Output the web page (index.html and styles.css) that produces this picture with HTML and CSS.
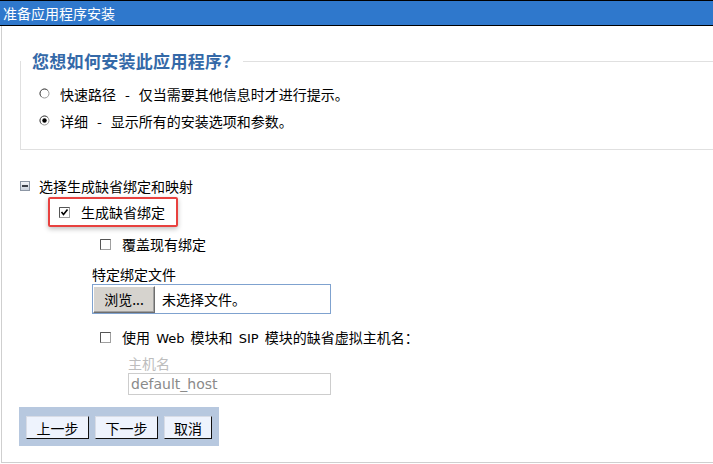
FILE: index.html
```html
<!DOCTYPE html>
<html lang="zh">
<head>
<meta charset="utf-8">
<link rel="stylesheet" href="styles.css">
</head>
<body>
<div class="header">准备应用程序安装</div>
<div class="main">
  <fieldset class="box">
    <legend class="legend">您想如何安装此应用程序？</legend>
    <div class="radio-row">
      <svg class="radio" width="11" height="11" viewBox="0 0 11 11"><circle cx="5.5" cy="5.5" r="4.5" fill="#fff" stroke="#9a9a9a" stroke-width="1"/><path d="M2.3 8.7 A4.5 4.5 0 0 1 8.7 2.3" fill="none" stroke="#555" stroke-width="1"/></svg>
      <span class="rlabel">快速路径<span class="sep">-</span>仅当需要其他信息时才进行提示。</span>
    </div>
    <div class="radio-row">
      <svg class="radio" width="11" height="11" viewBox="0 0 11 11"><circle cx="5.5" cy="5.5" r="4.5" fill="#fff" stroke="#9a9a9a" stroke-width="1"/><path d="M2.3 8.7 A4.5 4.5 0 0 1 8.7 2.3" fill="none" stroke="#555" stroke-width="1"/><circle cx="5.5" cy="5.5" r="2.2" fill="#000"/></svg>
      <span class="rlabel">详细<span class="sep">-</span>显示所有的安装选项和参数。</span>
    </div>
  </fieldset>

  <div class="section-head">
    <svg class="toggle" width="10" height="10" viewBox="0 0 10 10"><defs><linearGradient id="g" x1="0" y1="0" x2="0" y2="1"><stop offset="0" stop-color="#f4f6fa"/><stop offset="1" stop-color="#c8d0dc"/></linearGradient></defs><rect x="0.5" y="0.5" width="9" height="9" fill="url(#g)" stroke="#8c96a4"/><rect x="2" y="4" width="6" height="2" fill="#3a3f48"/></svg>
    <span>选择生成缺省绑定和映射</span>
  </div>

  <div class="highlight">
    <svg class="cb" width="11" height="11" viewBox="0 0 11 11"><rect x="0.5" y="0.5" width="10" height="10" fill="#fff" stroke="#a0a0a0"/><path d="M0.5 10.5 V0.5 H10.5" fill="none" stroke="#555"/><path d="M2.5 5 L4.5 7.5 L8.5 2.5" fill="none" stroke="#000" stroke-width="1.6"/></svg>
    <span>生成缺省绑定</span>
  </div>

  <div class="cb-row indent">
    <svg class="cb" width="11" height="11" viewBox="0 0 11 11"><rect x="0.5" y="0.5" width="10" height="10" fill="#fff" stroke="#a0a0a0"/><path d="M0.5 10.5 V0.5 H10.5" fill="none" stroke="#555"/></svg>
    <span class="cb-text">覆盖现有绑定</span>
  </div>

  <div class="file-label">特定绑定文件</div>
  <div class="file-box">
    <span class="browse">浏览...</span>
    <span class="nofile">未选择文件。</span>
  </div>

  <div class="cb-row indent host-row">
    <svg class="cb" width="11" height="11" viewBox="0 0 11 11"><rect x="0.5" y="0.5" width="10" height="10" fill="#fff" stroke="#a0a0a0"/><path d="M0.5 10.5 V0.5 H10.5" fill="none" stroke="#555"/></svg>
    <span class="cb-text">使用 <span class="latin">Web</span> 模块和 <span class="latin">SIP</span> 模块的缺省虚拟主机名：</span>
  </div>

  <div class="host-label">主机名</div>
  <div class="host-input">default_host</div>

  <div class="btn-bar">
    <button class="btn">上一步</button>
    <button class="btn">下一步</button>
    <button class="btn">取消</button>
  </div>
</div>
</body>
</html>
```

FILE: styles.css
```css
html, body {
  margin: 0;
  padding: 0;
  background: #fff;
}
body {
  font-family: "Noto Sans CJK SC", "DejaVu Sans", sans-serif;
  font-size: 14px;
  color: #000;
  width: 713px;
  height: 464px;
  overflow: hidden;
}
.header {
  height: 24px;
  line-height: 24px;
  background: #2f78cc;
  border-top: 1px solid #000;
  border-bottom: 1px solid #000;
  color: #fff;
  padding-left: 3px;
  font-size: 14px;
}
.main {
  margin-left: 1px;
  border-left: 1px solid #cfcfcf;
  border-bottom: 1px solid #cfcfcf;
  height: 437px;
  box-sizing: border-box;
  display: flex;
  flex-direction: column;
  align-items: flex-start;
}
.box {
  align-self: stretch;
  margin: 25px 0 0 18px;
  padding: 0 0 15px 0;
  border: 1px solid #e0e0e0;
  border-right: none;
  min-width: 0;
}
.legend {
  padding: 0 3px 0 11px;
  margin-left: 0;
  font-size: 17px;
  font-weight: bold;
  color: #3469a8;
  line-height: 20px;
  height: 20px;
  letter-spacing: 0.3px;
}
.radio-row {
  display: flex;
  align-items: center;
  height: 27px;
  padding-left: 18px;
}
.radio-row:first-of-type {
  margin-top: 9px;
}
.radio {
  display: block;
  flex: none;
}
.rlabel {
  margin-left: 10px;
  line-height: 20px;
}
.sep {
  margin: 0 9px;
}
.section-head {
  display: flex;
  align-items: center;
  height: 20px;
  margin: 26px 0 0 18px;
}
.toggle {
  display: block;
  margin-right: 9px;
}
.highlight {
  display: flex;
  align-items: center;
  margin: 1px 0 0 46px;
  width: 130px;
  height: 30px;
  box-sizing: border-box;
  border: 2px solid #e8413f;
  border-radius: 2px;
  padding-left: 9px;
  box-shadow: 0 2px 5px rgba(0,0,0,0.25);
}
.cb {
  display: block;
  flex: none;
}
.highlight span {
  margin-left: 11px;
}
.cb-row {
  display: flex;
  align-items: center;
  height: 20px;
  margin-top: 7px;
}
.indent {
  margin-left: 98px;
}
.cb-text {
  margin-left: 11px;
}
.latin {
  font-family: "DejaVu Sans", sans-serif;
  font-size: 13px;
  margin: 0 3px;
}
.file-label {
  margin: 11px 0 0 90px;
  height: 19px;
  line-height: 19px;
}
.file-box {
  margin-left: 90px;
  width: 239px;
  height: 30px;
  box-sizing: border-box;
  border: 1px solid #7fa2cf;
  display: flex;
  align-items: center;
}
.browse {
  height: 27px;
  width: 62px;
  box-sizing: border-box;
  background: #d6d3ce;
  border: 1px solid;
  border-color: #fff #6e6e6e #6e6e6e #fff;
  box-shadow: inset -1px -1px 0 #a0a0a0;
  text-align: center;
  line-height: 24px;
}
.nofile {
  margin-left: 7px;
}
.host-row {
  margin-top: 13px;
}
.host-label {
  margin: 7px 0 0 126px;
  height: 19px;
  line-height: 19px;
  color: #bdbdbd;
}
.host-input {
  margin-left: 126px;
  width: 203px;
  height: 22px;
  box-sizing: border-box;
  border: 1px solid #cdcdcd;
  color: #8a8a8a;
  font-family: "DejaVu Sans", sans-serif;
  font-size: 14px;
  line-height: 20px;
  padding-left: 2px;
}
.btn-bar {
  margin: 12px 0 0 17px;
  background: #b7c8df;
  height: 39px;
  box-sizing: border-box;
  padding: 9px 7px 0 7px;
  display: flex;
  gap: 6px;
  align-items: flex-start;
}
.btn {
  height: 23px;
  padding: 0;
  margin: 0;
  background: #eef3fd;
  border: 1px solid;
  border-color: #d8dce6 #111 #111 #d8dce6;
  font-family: "Noto Sans CJK SC", sans-serif;
  font-size: 14px;
  color: #000;
  line-height: 20px;
  width: 63px;
}
.btn:last-child {
  width: 48px;
}
```
